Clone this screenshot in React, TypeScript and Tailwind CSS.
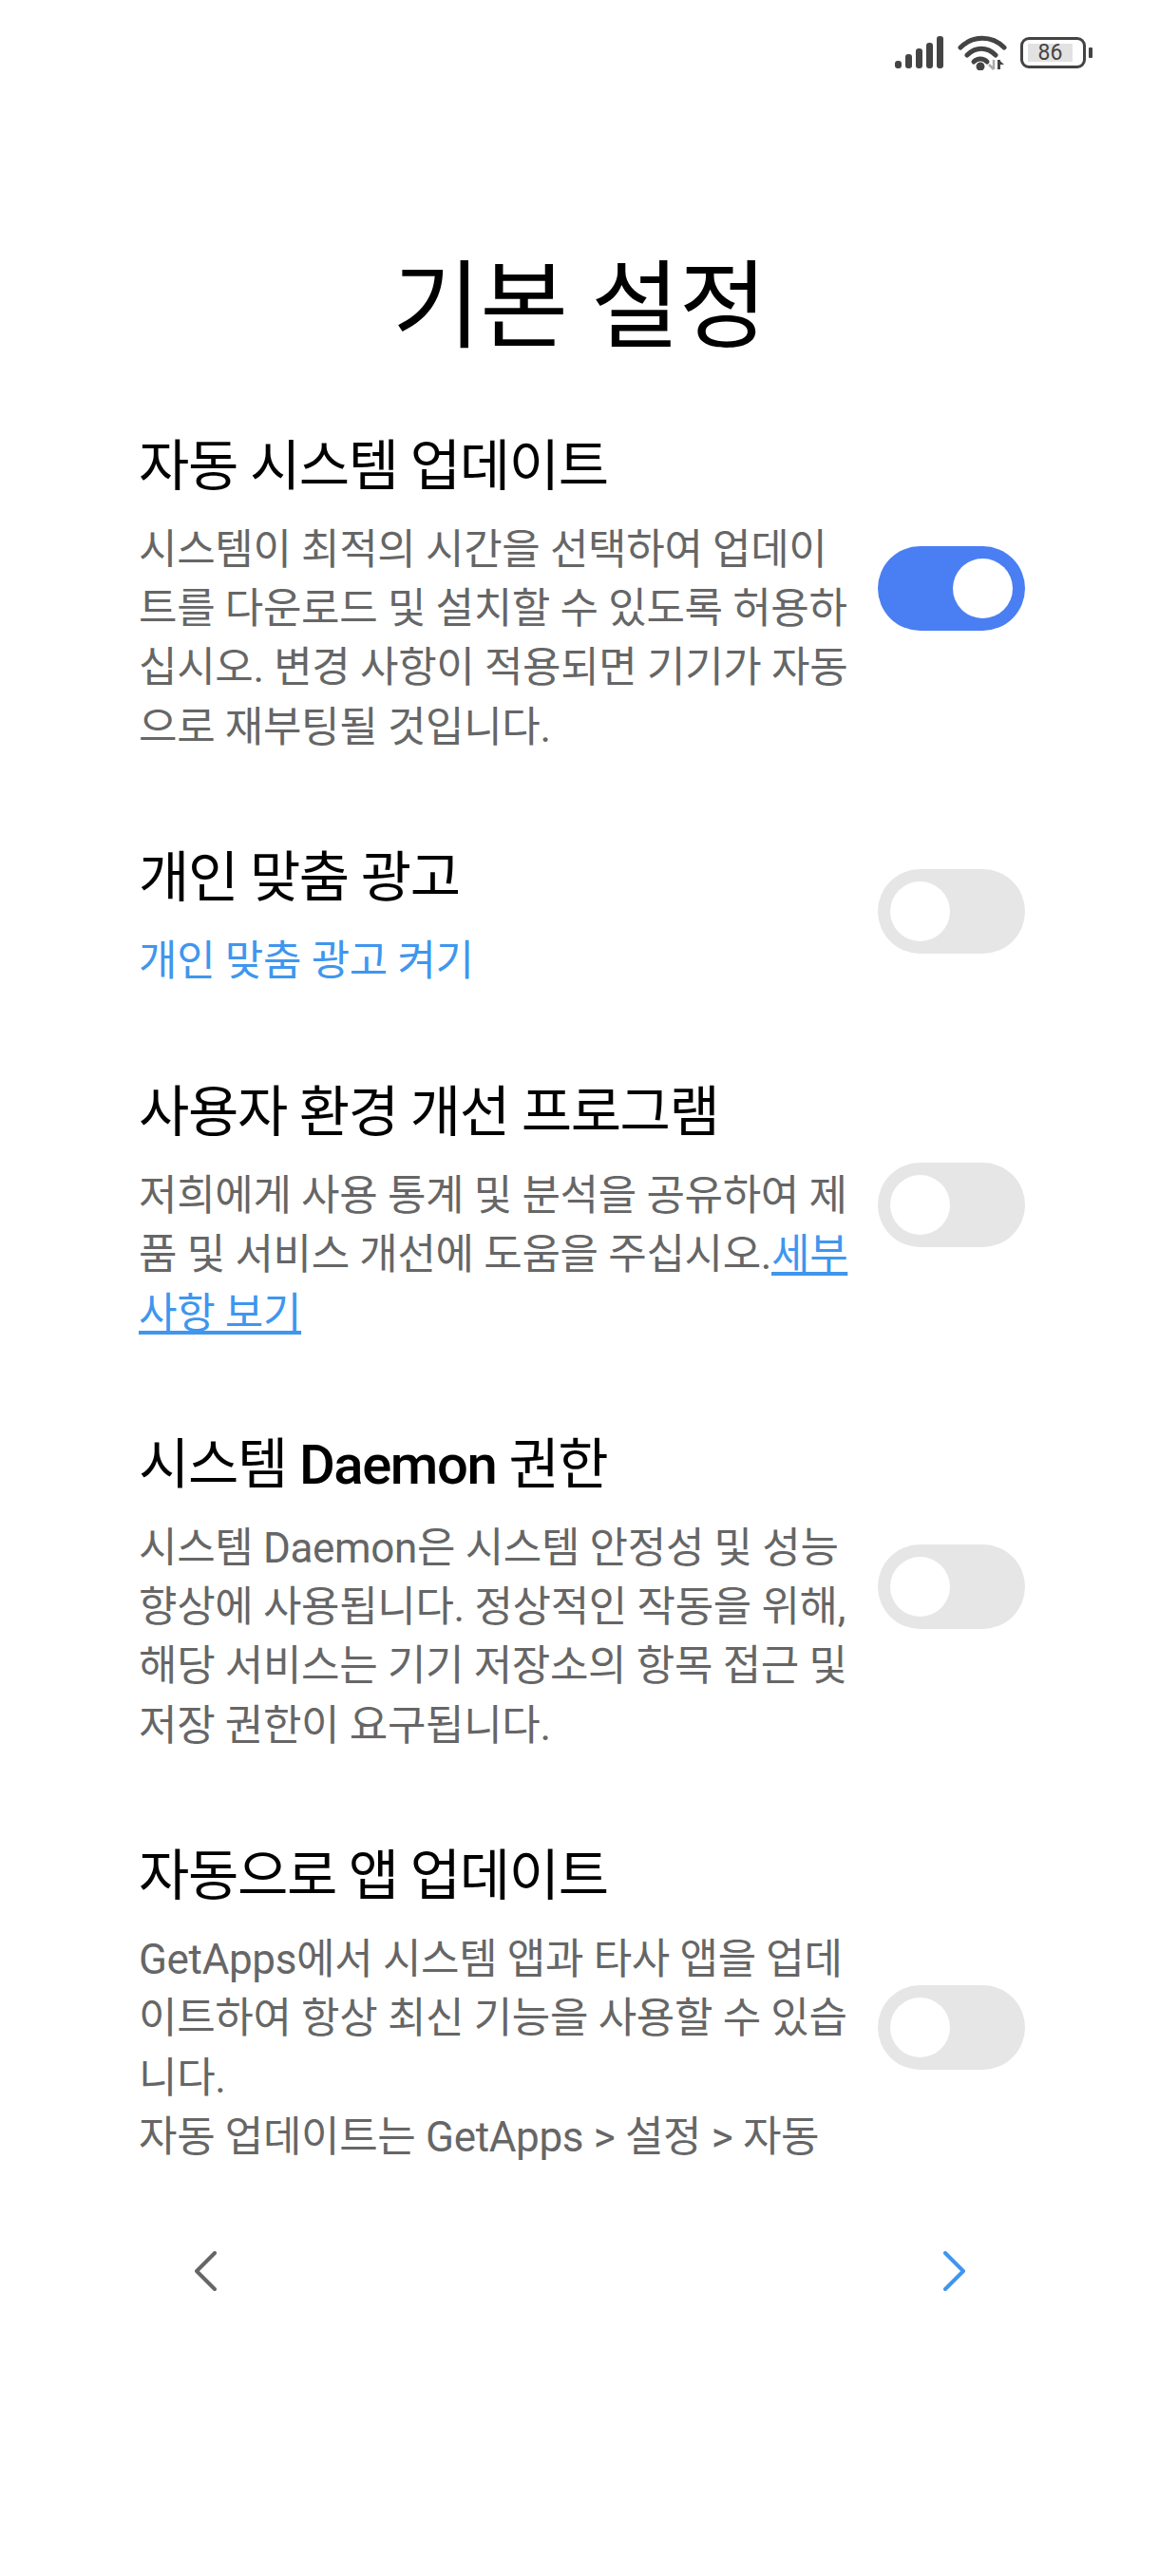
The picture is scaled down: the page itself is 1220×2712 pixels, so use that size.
import React from "react";

const font = { fontFamily: 'Roboto, "Noto Sans CJK KR", "Noto Sans", sans-serif' };

function Toggle({ on = false }: { on?: boolean }) {
  return (
    <div className={`mb-[14px] flex h-[89px] w-[155px] shrink-0 items-center rounded-full px-[13px] ${on ? "justify-end bg-[#4a7ff3]" : "justify-start bg-[#e6e6e6]"}`}>
      <div className="h-[63px] w-[63px] rounded-full bg-white" />
    </div>
  );
}

function Row({ title, lines, on, extra, first }: { title: React.ReactNode; lines?: string[]; on?: boolean; extra?: React.ReactNode; first?: boolean }) {
  return (
    <div className={`flex items-center justify-between ${first ? "" : "mt-[92.5px]"}`}>
      <div className="w-[760px]">
        <div className="h-[70px] whitespace-nowrap text-[58px] leading-[70px] tracking-[-1.4px] text-black">{title}</div>
        <div className="mt-[22px] text-[44px] leading-[62.2px] tracking-[-0.35px] text-[#666666]">
          {lines?.map((l) => <div key={l} className="h-[62.2px] whitespace-nowrap">{l}</div>)}
          {extra}
        </div>
      </div>
      <Toggle on={on} />
    </div>
  );
}

export default function App() {
  return (
    <div className="flex h-[2712px] w-[1220px] flex-col overflow-hidden bg-white" style={font}>
      <div className="flex h-[110px] items-center justify-end gap-[14px] pr-[70px]">
        <svg width="52" height="36" viewBox="0 0 52 36" fill="#444">
          <rect x="0" y="27" width="7" height="8" rx="3" />
          <rect x="11" y="20" width="7" height="15" rx="3" />
          <rect x="22" y="14" width="7" height="21" rx="3" />
          <rect x="33" y="8" width="7" height="27" rx="3" />
          <rect x="44" y="1" width="7" height="34" rx="3" />
        </svg>
        <svg width="52" height="38" viewBox="0 0 52 38" fill="none" stroke="#444" strokeWidth="5" strokeLinecap="round">
          <path d="M3 14 C16 1 36 1 49 14" />
          <path d="M10 22 C19 13 31 13 40 22" />
          <path d="M17 29 C21 25 27 25 31 29" />
          <circle cx="24" cy="34" r="2" fill="#444" />
          <path d="M38 27 V37 M33 32 L38 37" stroke="#aaa" strokeWidth="2.5" strokeLinecap="butt" />
          <path d="M43.5 27 V37" strokeWidth="3" strokeLinecap="butt" />
          <path d="M43.5 27 L49 32 H43.5 Z" fill="#444" stroke="none" />
        </svg>
        <div className="flex items-center">
          <div className="flex h-[33px] w-[69px] items-center rounded-[9px] border-[3px] border-[#444] pl-[5px]">
            <div className="flex h-[19px] w-[47px] items-center justify-center bg-[#e2e2e2] text-[23px] leading-none text-[#444]">86</div>
          </div>
          <div className="ml-[3px] h-[11px] w-[4px] rounded-[1px] bg-[#444]" />
        </div>
      </div>

      <h1 className="mt-[150px] h-[128px] text-center text-[101px] font-normal leading-[128px] tracking-[-0.5px] text-black">기본 설정</h1>

      <div className="mt-[68px] h-[1829px] shrink-0 overflow-hidden pl-[146px] pr-[141px]">
        <Row first title="자동 시스템 업데이트" on lines={["시스템이 최적의 시간을 선택하여 업데이", "트를 다운로드 및 설치할 수 있도록 허용하", "십시오. 변경 사항이 적용되면 기기가 자동", "으로 재부팅될 것입니다."]} />
        <Row title="개인 맞춤 광고" extra={<div className="h-[62.2px] text-[#3f96ee]">개인 맞춤 광고 켜기</div>} />
        <Row title="사용자 환경 개선 프로그램" extra={<>
          <div className="h-[62.2px] whitespace-nowrap">저희에게 사용 통계 및 분석을 공유하여 제</div>
          <div className="h-[62.2px] whitespace-nowrap">품 및 서비스 개선에 도움을 주십시오.<span className="text-[#3f96ee] underline">세부</span></div>
          <div className="h-[62.2px] text-[#3f96ee] underline">사항 보기</div>
        </>} />
        <Row title={<>시스템 <span className="font-medium">Daemon</span> 권한</>} lines={["시스템 Daemon은 시스템 안정성 및 성능", "향상에 사용됩니다. 정상적인 작동을 위해,", "해당 서비스는 기기 저장소의 항목 접근 및", "저장 권한이 요구됩니다."]} />
        <Row title="자동으로 앱 업데이트" lines={["GetApps에서 시스템 앱과 타사 앱을 업데", "이트하여 항상 최신 기능을 사용할 수 있습", "니다.", "자동 업데이트는 GetApps > 설정 > 자동", "\u00a0"]} />
      </div>

      <div className="mt-[85px] flex items-center justify-between pl-[205px] pr-[204px]">
        <svg width="23" height="42" viewBox="0 0 23 42" fill="none" stroke="#666" strokeWidth="4" strokeLinecap="round" strokeLinejoin="round"><path d="M21 2 L2 21 L21 40" /></svg>
        <svg width="23" height="42" viewBox="0 0 23 42" fill="none" stroke="#3f96ee" strokeWidth="4" strokeLinecap="round" strokeLinejoin="round"><path d="M2 2 L21 21 L2 40" /></svg>
      </div>
    </div>
  );
}
